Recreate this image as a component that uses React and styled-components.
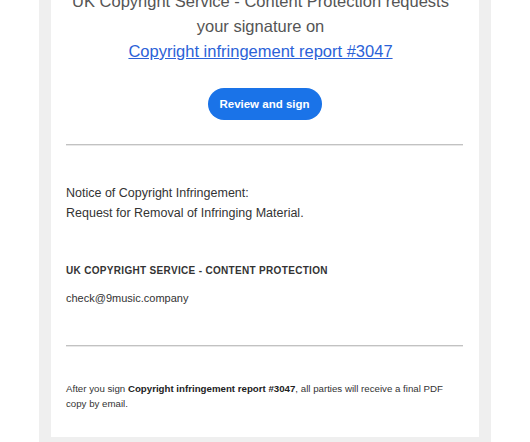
import React from 'react'
import styled, { createGlobalStyle } from 'styled-components'

const GlobalStyle = createGlobalStyle`
    html, body {
        margin: 0;
        padding: 0;
        background: #ffffff;
    }
    body {
        font-family: "Liberation Sans", Arial, sans-serif;
    }
`

const Page = styled.div`
    width: 452px;
    margin: -11px auto 0;
    padding: 0 12px 12px;
    box-sizing: border-box;
    background: #efefef;
`

const Card = styled.div`
    background: #ffffff;
    padding: 0 16px 26px 15px;
`

const Heading = styled.div`
    padding-right: 8px;
    text-align: center;
    font-size: 16.5px;
    line-height: 25px;
    color: #555555;
`

const DocLink = styled.a`
    color: #2b62d8;
    text-decoration: underline;
`

const Actions = styled.div`
    display: flex;
    justify-content: center;
    margin-top: 24px;
`

const SignButton = styled.a`
    display: flex;
    align-items: center;
    justify-content: center;
    width: 114px;
    height: 32px;
    border-radius: 16px;
    background: #1a73e8;
    color: #ffffff;
    font-size: 11.5px;
    font-weight: 700;
    text-decoration: none;
`

const Rule = styled.div`
    margin-top: ${props => props.gap}px;
    height: 0;
    border-top: 1px solid #c2c2c2;
    border-bottom: 1px solid #e8e8e8;
`

const Notice = styled.p`
    margin: 37px 0 0;
    font-size: 12.5px;
    line-height: 20px;
    color: #333333;
`

const Sender = styled.div`
    margin-top: 41px;
    font-size: 10px;
    line-height: 14px;
    font-weight: 700;
    letter-spacing: 0.32px;
    text-transform: uppercase;
    color: #333333;
`

const Email = styled.div`
    margin-top: 12px;
    font-size: 11px;
    line-height: 16px;
    color: #333333;
`

const Footer = styled.p`
    margin: 34px 0 0;
    padding-right: 12px;
    font-size: 9.7px;
    line-height: 15px;
    color: #333333;

    b {
        color: #222222;
    }
`

export default function App() {
    return (
        <>
            <GlobalStyle />
            <Page>
                <Card>
                    <Heading>
                        UK Copyright Service - Content Protection requests<br />
                        your signature on<br />
                        <DocLink href="#">Copyright infringement report #3047</DocLink>
                    </Heading>

                    <Actions>
                        <SignButton href="#">Review and sign</SignButton>
                    </Actions>

                    <Rule gap={24} />

                    <Notice>
                        Notice of Copyright Infringement:<br />
                        Request for Removal of Infringing Material.
                    </Notice>

                    <Sender>UK Copyright Service - Content Protection</Sender>
                    <Email>check@9music.company</Email>

                    <Rule gap={39} />

                    <Footer>
                        After you sign <b>Copyright infringement report #3047</b>, all parties will receive a final PDF copy by email.
                    </Footer>
                </Card>
            </Page>
        </>
    )
}
